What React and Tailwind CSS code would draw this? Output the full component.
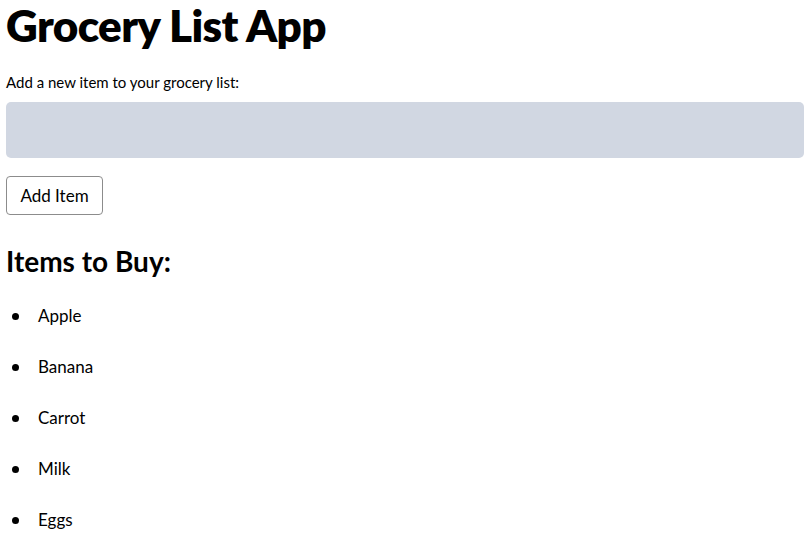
import React, { useState } from 'react';

const App = () => {
  const [items] = useState(['Apple', 'Banana', 'Carrot', 'Milk', 'Eggs']);

  return (
    <div className="min-h-screen bg-white px-[6px] text-black" style={{ fontFamily: 'Lato, "Noto Sans", sans-serif' }}>
      <h1 className="pt-[1px] text-[44px] font-extrabold leading-[48px] tracking-[-0.6px]">Grocery List App</h1>

      <label className="mt-[24px] block text-[15px] leading-[18px]">Add a new item to your grocery list:</label>
      <input type="text" className="mt-[11px] block h-[56px] w-full rounded-[5px] bg-[#d1d7e2] px-3 outline-none" />

      <button className="mt-[18px] block h-[39px] w-[97px] rounded-[4px] border border-[#8c8c8c] bg-white text-[17px]">
        Add Item
      </button>

      <h2 className="mt-[29px] text-[28px] font-bold leading-[34px]">Items to Buy:</h2>

      <ul className="mt-[27px] flex flex-col gap-[29px] text-[17px] leading-[22px]">
        {items.map((item) => (
          <li key={item} className="flex items-center">
            <span className="ml-[6px] h-[7px] w-[7px] rounded-full bg-black" />
            <span className="ml-[19px]">{item}</span>
          </li>
        ))}
      </ul>
    </div>
  );
};

export default App;
